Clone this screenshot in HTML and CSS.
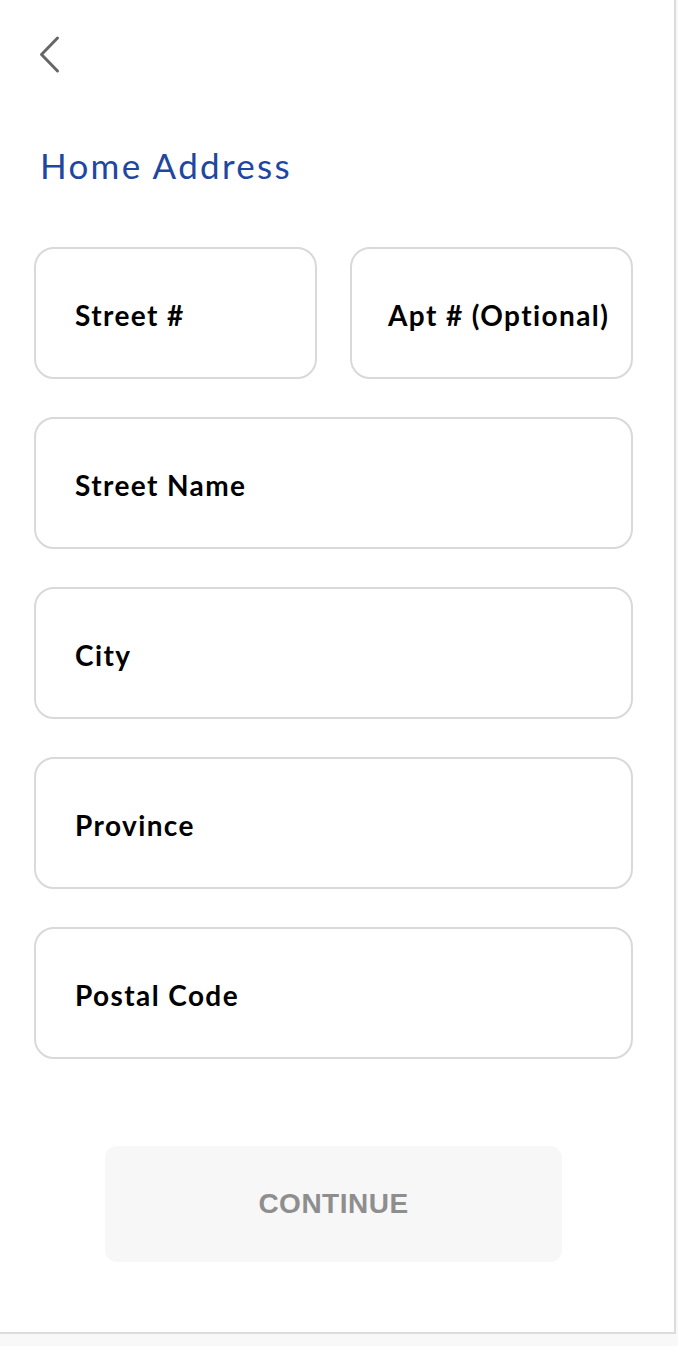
FILE: index.html
```html
<!DOCTYPE html>
<html lang="en">
<head>
<meta charset="utf-8">
<title>Home Address</title>
<link rel="stylesheet" href="styles.css">
</head>
<body>
<div class="page">
  <a class="back" href="#" aria-label="Back">
    <svg width="24" height="40" viewBox="0 0 24 40" fill="none">
      <path d="M19.5 3 L3.5 19.5 L19.5 36" stroke="#666666" stroke-width="3" stroke-linecap="round" stroke-linejoin="round"/>
    </svg>
  </a>
  <h1 class="title">Home Address</h1>
  <form class="form">
    <div class="row two">
      <div class="field"><span class="label">Street #</span></div>
      <div class="field"><span class="label label-apt">Apt # (Optional)</span></div>
    </div>
    <div class="field"><span class="label">Street Name</span></div>
    <div class="field"><span class="label">City</span></div>
    <div class="field"><span class="label">Province</span></div>
    <div class="field"><span class="label">Postal Code</span></div>
  </form>
  <button class="continue" type="button">CONTINUE</button>
</div>
</body>
</html>
```

FILE: styles.css
```css
html, body {
  margin: 0;
  padding: 0;
}
body {
  background: #f8f8f8;
  font-family: "Lato", "Open Sans", sans-serif;
}
.page {
  width: 674px;
  height: 1332px;
  background: #ffffff;
  border-right: 2px solid #dcdcdc;
  border-bottom: 2px solid #dcdcdc;
  display: flex;
  flex-direction: column;
}
.back {
  display: block;
  width: 24px;
  height: 40px;
  margin: 35px 0 0 38px;
}
.back svg {
  display: block;
}
.title {
  margin: 70px 0 0 40px;
  font-size: 35px;
  line-height: 40px;
  font-weight: 400;
  color: #1f47a1;
  letter-spacing: 2.3px;
}
.form {
  margin: 62px 41px 0 34px;
  display: flex;
  flex-direction: column;
  gap: 38px;
}
.row.two {
  display: grid;
  grid-template-columns: 1fr 1fr;
  gap: 33px;
}
.field {
  box-sizing: border-box;
  height: 132px;
  border: 2px solid #d9d9d9;
  border-radius: 20px;
  display: flex;
  align-items: center;
  padding: 4px 0 0 39px;
}
.label {
  font-size: 28px;
  font-weight: 700;
  color: #000;
  letter-spacing: 1.4px;
}
.field .label-apt {
  margin-left: -3px;
}
.continue {
  margin: 87px 0 0 105px;
  width: 457px;
  height: 116px;
  border: none;
  border-radius: 12px;
  background: #f7f7f7;
  color: #8e8e8e;
  font-family: "Liberation Sans", Arial, sans-serif;
  font-weight: 700;
  font-size: 28px;
  letter-spacing: 0.5px;
  padding: 0;
}
```
